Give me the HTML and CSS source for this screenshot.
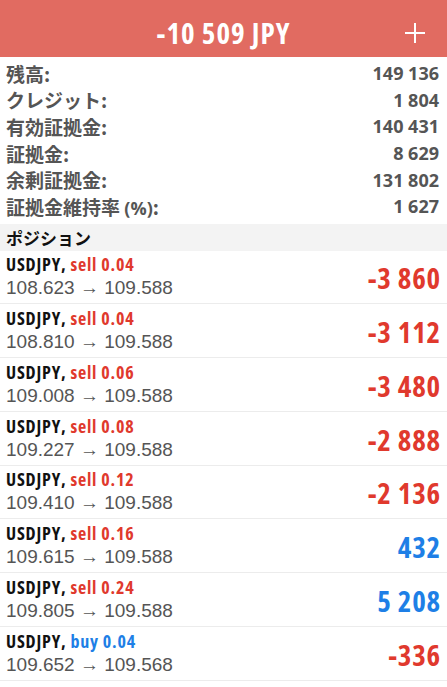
FILE: index.html
```html
<!DOCTYPE html>
<html lang="ja">
<head>
    <meta charset="UTF-8">
    <meta name="viewport" content="width=device-width, initial-scale=1.0">
    <title>トレード</title>
    <link rel="stylesheet" href="styles.css">
</head>
<body>
    <div class="header">
        <div class="header-title">-10 509 JPY</div>
        <div class="header-add">
            <svg width="20" height="20" viewBox="0 0 20 20">
                <path d="M10 0 V20 M0 10 H20" stroke="#fff" stroke-width="2" fill="none"/>
            </svg>
        </div>
    </div>

    <div class="summary">
        <div class="summary-row"><span class="label">残高:</span><span class="value">149 136</span></div>
        <div class="summary-row"><span class="label">クレジット:</span><span class="value">1 804</span></div>
        <div class="summary-row"><span class="label">有効証拠金:</span><span class="value">140 431</span></div>
        <div class="summary-row"><span class="label">証拠金:</span><span class="value">8 629</span></div>
        <div class="summary-row"><span class="label">余剰証拠金:</span><span class="value">131 802</span></div>
        <div class="summary-row"><span class="label">証拠金維持率 <span class="latin">(%)</span>:</span><span class="value">1 627</span></div>
    </div>

    <div class="section-title">ポジション</div>

    <div class="positions">
        <div class="position">
            <div class="position-info">
                <div class="symbol">USDJPY, <span class="sell">sell 0.04</span></div>
                <div class="prices">108.623 → 109.588</div>
            </div>
            <div class="profit loss">-3 860</div>
        </div>
        <div class="position">
            <div class="position-info">
                <div class="symbol">USDJPY, <span class="sell">sell 0.04</span></div>
                <div class="prices">108.810 → 109.588</div>
            </div>
            <div class="profit loss">-3 112</div>
        </div>
        <div class="position">
            <div class="position-info">
                <div class="symbol">USDJPY, <span class="sell">sell 0.06</span></div>
                <div class="prices">109.008 → 109.588</div>
            </div>
            <div class="profit loss">-3 480</div>
        </div>
        <div class="position">
            <div class="position-info">
                <div class="symbol">USDJPY, <span class="sell">sell 0.08</span></div>
                <div class="prices">109.227 → 109.588</div>
            </div>
            <div class="profit loss">-2 888</div>
        </div>
        <div class="position">
            <div class="position-info">
                <div class="symbol">USDJPY, <span class="sell">sell 0.12</span></div>
                <div class="prices">109.410 → 109.588</div>
            </div>
            <div class="profit loss">-2 136</div>
        </div>
        <div class="position">
            <div class="position-info">
                <div class="symbol">USDJPY, <span class="sell">sell 0.16</span></div>
                <div class="prices">109.615 → 109.588</div>
            </div>
            <div class="profit gain">432</div>
        </div>
        <div class="position">
            <div class="position-info">
                <div class="symbol">USDJPY, <span class="sell">sell 0.24</span></div>
                <div class="prices">109.805 → 109.588</div>
            </div>
            <div class="profit gain">5 208</div>
        </div>
        <div class="position">
            <div class="position-info">
                <div class="symbol">USDJPY, <span class="buy">buy 0.04</span></div>
                <div class="prices">109.652 → 109.568</div>
            </div>
            <div class="profit loss">-336</div>
        </div>
    </div>
</body>
</html>
```

FILE: styles.css
```css
* {
    margin: 0;
    padding: 0;
    box-sizing: border-box;
}
body {
    font-family: "Open Sans", "DejaVu Sans Condensed", "Noto Sans CJK JP", sans-serif;
    font-stretch: 75%;
    background: #fff;
    width: 447px;
    height: 687px;
    overflow: hidden;
}
.header {
    height: 57px;
    background: #e16b61;
    display: flex;
    align-items: center;
    justify-content: center;
    position: relative;
    padding-top: 8px;
}
.header-title {
    color: #fff;
    font-size: 29px;
    font-weight: bold;
    letter-spacing: 1px;
}
.header-add {
    position: absolute;
    right: 22px;
    top: 23px;
    width: 20px;
    height: 20px;
}
.summary {
    padding: 3px 8px 4px 6px;
}
.summary-row {
    display: flex;
    justify-content: space-between;
    align-items: center;
    height: 26.6px;
    color: #555;
}
.label {
    font-family: "Noto Sans CJK JP", sans-serif;
    font-size: 19px;
    font-weight: bold;
}
.label .latin {
    font-family: "Open Sans", "DejaVu Sans Condensed", sans-serif;
    font-stretch: 100%;
    font-size: 18px;
}
.value {
    font-size: 18px;
    font-weight: bold;
    font-stretch: 100%;
}
.section-title {
    background: #f3f3f3;
    height: 27px;
    display: flex;
    align-items: center;
    padding-left: 6px;
    font-family: "Noto Sans CJK JP", sans-serif;
    font-size: 17px;
    font-weight: bold;
    color: #111;
}
.position {
    height: 53.75px;
    display: flex;
    justify-content: space-between;
    align-items: center;
    padding: 0 6px 0 6px;
    border-bottom: 1px solid #ececec;
}
.symbol {
    font-size: 18px;
    font-weight: bold;
    color: #111;
    line-height: 22px;
    letter-spacing: 0.8px;
}
.sell {
    color: #e0392d;
}
.buy {
    color: #1e7fe6;
}
.prices {
    font-family: "Liberation Sans", sans-serif;
    font-stretch: normal;
    font-size: 19px;
    color: #555;
    line-height: 25px;
}
.profit {
    font-size: 29px;
    font-weight: bold;
    letter-spacing: 0.8px;
    padding-top: 2px;
}
.loss {
    color: #e0392d;
}
.gain {
    color: #1e7fe6;
}
```
